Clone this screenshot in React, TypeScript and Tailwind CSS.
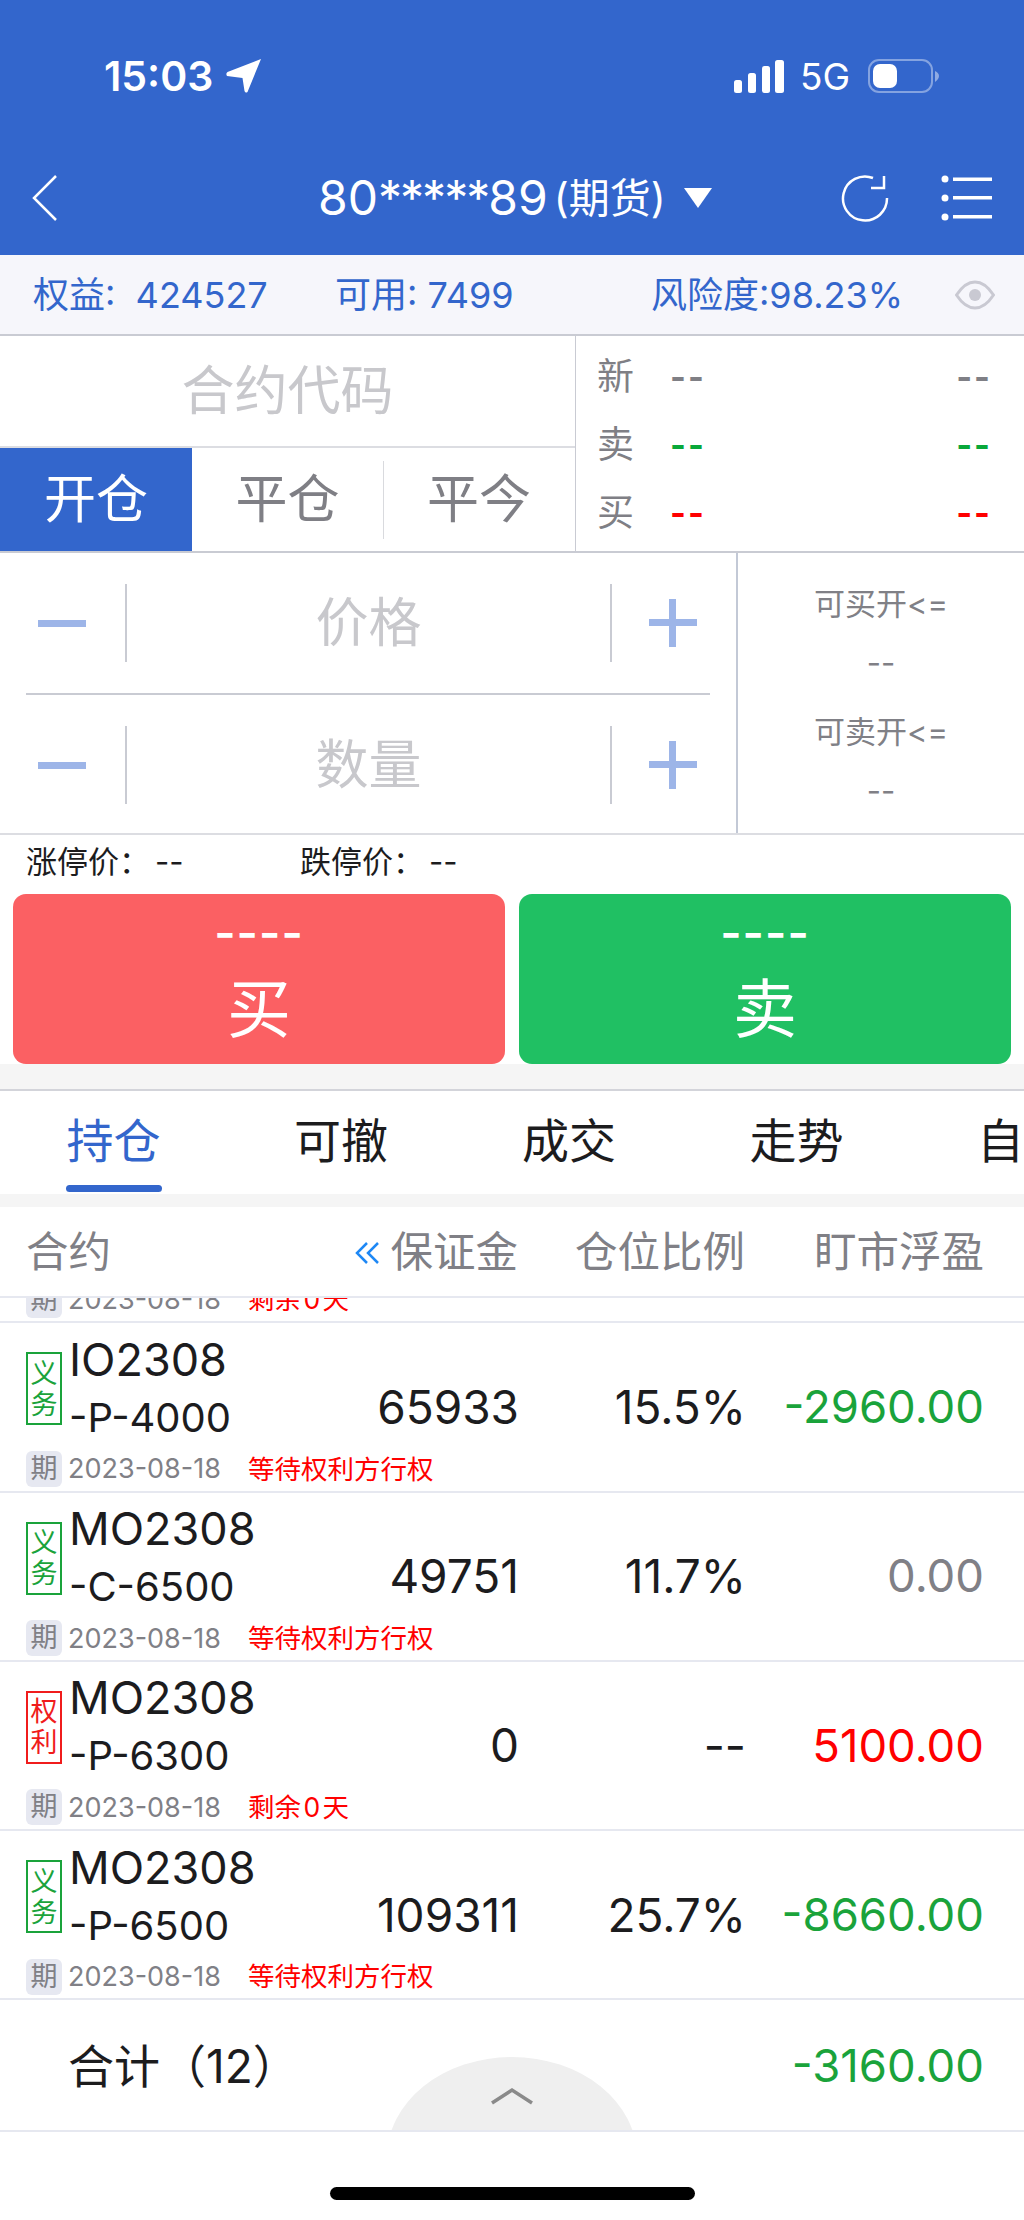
import React from "react";

const font = { fontFamily: 'Inter, "Noto Sans CJK SC", sans-serif' };

function Arrow() {
  return (
    <svg width="36" height="34" viewBox="0 0 36 34" className="ml-[13px]">
      <path d="M35 0 L21.5 33 Q19.5 34.5 18.5 32 L16.5 19 L1 17 Q-0.5 14.5 1.5 13 Z" fill="#fff" />
    </svg>
  );
}

function Signal() {
  return (
    <svg width="50" height="33" viewBox="0 0 50 33">
      <rect x="0" y="20" width="8" height="13" rx="2.5" fill="#fff" />
      <rect x="14" y="13" width="8" height="20" rx="2.5" fill="#fff" />
      <rect x="28" y="6" width="8" height="27" rx="2.5" fill="#fff" />
      <rect x="41" y="0" width="9" height="33" rx="2.5" fill="#fff" />
    </svg>
  );
}

function Battery() {
  return (
    <svg width="72" height="34" viewBox="0 0 72 34">
      <rect x="1" y="1" width="63" height="32" rx="10" fill="none" stroke="#fff" strokeOpacity="0.4" strokeWidth="2" />
      <rect x="5" y="5" width="24" height="24" rx="7" fill="#fff" />
      <path d="M67 12 Q71 14 71 17 Q71 20 67 23 Z" fill="#fff" fillOpacity="0.45" />
    </svg>
  );
}

function Eye() {
  return (
    <svg width="40" height="30" viewBox="0 0 40 30">
      <path d="M1.5 15 Q10 2 20 2 Q30 2 38.5 15 Q30 28 20 28 Q10 28 1.5 15 Z" fill="none" stroke="#c9c9d2" strokeWidth="3" />
      <circle cx="20" cy="15" r="6" fill="#c9c9d2" />
    </svg>
  );
}

function Minus() {
  return <div className="w-[48px] h-[7px] bg-[#9db5e8]" />;
}

function Plus() {
  return (
    <div className="relative w-[48px] h-[48px]">
      <div className="absolute left-0 top-[20px] w-[48px] h-[7px] bg-[#9db5e8]" />
      <div className="absolute left-[20px] top-0 w-[7px] h-[48px] bg-[#9db5e8]" />
    </div>
  );
}

function Stepper({ label }: { label: string }) {
  return (
    <div className="flex items-center h-[78px]">
      <div className="w-[127px] h-full pl-[38px] flex items-center border-r-[2px] border-[#c9cbd3]">
        <Minus />
      </div>
      <div className="w-[483px] text-center text-[53px] leading-none text-[#c8c8cc]">{label}</div>
      <div className="h-full pl-[37px] flex items-center border-l-[2px] border-[#c9cbd3]">
        <Plus />
      </div>
    </div>
  );
}

function Quote({ label, color }: { label: string; color: string }) {
  return (
    <div className="flex items-center h-[68px] pl-[21px] pr-[32px]">
      <span className="text-[37px] leading-none text-[#7f7f85] w-[73px]">{label}</span>
      <span className={`text-[34px] leading-none font-bold tracking-[2px] ${color}`}>--</span>
      <span className={`ml-auto text-[34px] leading-none font-bold tracking-[2px] ${color}`}>--</span>
    </div>
  );
}

type Row = {
  kind: "义务" | "权利";
  a: string;
  b: string;
  margin: string;
  pct: string;
  pl: string;
  plColor: string;
  note: string;
};

const rows: Row[] = [
  { kind: "义务", a: "MO2308", b: "-P-6000", margin: "", pct: "", pl: "", plColor: "", note: "剩余\u200A0\u200A天" },
  { kind: "义务", a: "IO2308", b: "-P-4000", margin: "65933", pct: "15.5%", pl: "-2960.00", plColor: "text-[#1aa33b]", note: "等待权利方行权" },
  { kind: "义务", a: "MO2308", b: "-C-6500", margin: "49751", pct: "11.7%", pl: "0.00", plColor: "text-[#808086]", note: "等待权利方行权" },
  { kind: "权利", a: "MO2308", b: "-P-6300", margin: "0", pct: "--", pl: "5100.00", plColor: "text-[#ff0000]", note: "剩余\u200A0\u200A天" },
  { kind: "义务", a: "MO2308", b: "-P-6500", margin: "109311", pct: "25.7%", pl: "-8660.00", plColor: "text-[#1aa33b]", note: "等待权利方行权" },
];

function Position({ row, first }: { row: Row; first?: boolean }) {
  const tag = row.kind === "义务" ? "border-[#1aa33b] text-[#1aa33b]" : "border-[#f01c1c] text-[#f01c1c]";
  return (
    <div className={`flex items-center h-[169.25px] shrink-0 border-b-[2px] border-[#e6e8f0] text-[#1c1c1e] ${first ? "mt-[-144px]" : ""}`}>
      <div className="w-[370px] shrink-0 pl-[26px]">
        <div className="flex items-center h-[116px] mt-[4px]">
          <div className={`w-[36px] h-[73px] shrink-0 border-[2px] flex flex-col items-center justify-center text-[27px] leading-[31px] ${tag}`}>
            <span>{row.kind[0]}</span>
            <span>{row.kind[1]}</span>
          </div>
          <div className="ml-[7px] whitespace-nowrap">
            <div className="text-[45px] leading-[58px]">{row.a}</div>
            <div className="text-[40px] leading-[58px]">{row.b}</div>
          </div>
        </div>
        <div className="flex items-center h-[36px] mt-[4px] whitespace-nowrap">
          <div className="w-[36px] h-[36px] shrink-0 rounded-[6px] bg-[#e6e8f1] text-[#808086] text-[27px] leading-[36px] text-center">期</div>
          <span className="ml-[6px] w-[180px] shrink-0 text-[27px] leading-none text-[#808086]">2023-08-18</span>
          <span className="text-[26.5px] leading-none text-[#ff0000]">{row.note}</span>
        </div>
      </div>
      <div className="w-[149px] text-right text-[46px] leading-none">{row.margin}</div>
      <div className="w-[227px] text-right text-[46px] leading-none">{row.pct}</div>
      <div className={`w-[238px] text-right text-[45.5px] leading-none ${row.plColor}`}>{row.pl}</div>
    </div>
  );
}

export default function App() {
  return (
    <div style={font} className="relative w-[1024px] h-[2220px] bg-white overflow-hidden">
      {/* blue header */}
      <div className="h-[255px] bg-[#3366cc] text-white">
        <div className="h-[150px] flex items-start pt-[59px]">
          <div className="pl-[104px] flex items-center h-[34px]">
            <span className="text-[41px] leading-none font-semibold">15:03</span>
            <Arrow />
          </div>
          <div className="ml-auto pr-[84px] flex items-center h-[34px]">
            <Signal />
            <span className="ml-[16px] text-[37px] leading-none">5G</span>
            <span className="ml-[18px]"><Battery /></span>
          </div>
        </div>
        <div className="relative h-[105px] flex items-start">
          <svg width="30" height="48" viewBox="0 0 30 48" className="ml-[31px] mt-[24px]">
            <path d="M25 2 L3 24 L25 46" fill="none" stroke="#fff" strokeWidth="2.5" />
          </svg>
          <div className="absolute left-[318px] top-[22px] flex items-center h-[52px] whitespace-nowrap">
            <span className="text-[48px] leading-none">
              80<span className="tracking-[-2px]">*****</span>89
            </span>
            <span className="ml-[6px] text-[41px] leading-none">(期货)</span>
            <svg width="28" height="20" viewBox="0 0 28 20" className="ml-[18px]">
              <path d="M0 0 H28 L14 20 Z" fill="#fff" />
            </svg>
          </div>
          <div className="ml-auto flex items-start pr-[31px]">
            <svg width="50" height="50" viewBox="0 0 50 50" className="mt-[22px] mr-[1px]">
              <path d="M32 6 A22 22 0 1 0 46 26" fill="none" stroke="#fff" strokeWidth="2.5" />
              <path d="M30 16 H43 V4" fill="none" stroke="#fff" strokeWidth="2.5" />
            </svg>
            <svg width="52" height="46" viewBox="0 0 52 46" className="ml-[49px] mt-[25px]">
              <circle cx="4" cy="4" r="3.5" fill="#fff" />
              <circle cx="4" cy="23" r="3.5" fill="#fff" />
              <circle cx="4" cy="42" r="3.5" fill="#fff" />
              <rect x="12" y="2.5" width="39" height="3.5" fill="#fff" />
              <rect x="12" y="21" width="39" height="3.5" fill="#fff" />
              <rect x="12" y="40" width="39" height="3.5" fill="#fff" />
            </svg>
          </div>
        </div>
      </div>

      {/* account bar */}
      <div className="h-[81px] bg-[#f6f6fb] border-b-[2px] border-[#c9cbd3] flex items-center text-[#3366cc] text-[36px] leading-none whitespace-nowrap">
        <span className="ml-[33px] w-[302px]">权益:&nbsp;&nbsp;424527</span>
        <span className="w-[316px]">可用: 7499</span>
        <span className="w-[304px]">风险度:98.23%</span>
        <Eye />
      </div>

      {/* contract + quotes */}
      <div className="flex h-[217px] border-b-[2px] border-[#c9cbd3]">
        <div className="w-[576px] shrink-0 border-r border-[#c9cbd3] flex flex-col">
          <div className="h-[112px] border-b-[2px] border-[#dcdde2] flex items-center justify-center text-[53px] leading-none text-[#c8c8cc]">
            合约代码
          </div>
          <div className="flex-1 flex items-stretch text-[52px] leading-none text-[#7f7f85]">
            <div className="w-[192px] bg-[#3366cc] text-white flex items-center justify-center">开仓</div>
            <div className="w-[191px] flex items-center justify-center">平仓</div>
            <div className="flex-1 flex items-center justify-center relative">
              <div className="absolute left-0 top-[13px] bottom-[12px] border-l border-[#d9dade]" />
              平今
            </div>
          </div>
        </div>
        <div className="flex-1 flex flex-col justify-center pt-[2px]">
          <Quote label="新" color="text-[#7f7f85]" />
          <Quote label="卖" color="text-[#09a83a]" />
          <Quote label="买" color="text-[#ff0000]" />
        </div>
      </div>

      {/* steppers */}
      <div className="flex h-[282px] border-b-[2px] border-[#dcdde2]">
        <div className="w-[738px] shrink-0 border-r-[2px] border-[#c3c9d6] flex flex-col">
          <div className="h-[140px] pt-[31px]">
            <Stepper label="价格" />
          </div>
          <div className="mx-[26px] border-t-[2px] border-[#c9cbd3]" />
          <div className="pt-[31px]">
            <Stepper label="数量" />
          </div>
        </div>
        <div className="flex-1 flex flex-col items-center text-[31px] leading-none text-[#808086]">
          <span className="mt-[35px]">可买开&lt;=</span>
          <span className="mt-[28px]">--</span>
          <span className="mt-[38px]">可卖开&lt;=</span>
          <span className="mt-[28px]">--</span>
        </div>
      </div>

      {/* limits */}
      <div className="h-[59px] flex items-center text-[31px] leading-none text-[#1c1c1e] whitespace-nowrap pb-[6px]">
        <span className="ml-[26px] w-[129px]">涨停价：</span>
        <span className="w-[145px]">--</span>
        <span className="w-[129px]">跌停价：</span>
        <span>--</span>
      </div>

      {/* action buttons */}
      <div className="flex gap-[14px] px-[13px] h-[170px] text-white">
        <div className="w-[492px] rounded-[13px] bg-[#fb6063] flex flex-col items-center">
          <span className="mt-[15px] text-[46px] leading-[46px] font-semibold tracking-[1px]">----</span>
          <span className="mt-[21px] text-[64px] leading-[66px]">买</span>
        </div>
        <div className="w-[492px] rounded-[13px] bg-[#20c063] flex flex-col items-center">
          <span className="mt-[15px] text-[46px] leading-[46px] font-semibold tracking-[1px]">----</span>
          <span className="mt-[21px] text-[64px] leading-[66px]">卖</span>
        </div>
      </div>

      <div className="h-[27px] bg-[#f5f5f5] border-b-[2px] border-[#d3d4da]" />

      {/* tabs */}
      <div className="h-[103px] flex overflow-hidden text-[47px] leading-none text-[#1c1c1e] whitespace-nowrap">
        <div className="relative w-[227px] shrink-0 pt-[26px] text-center text-[#3366cc]">
          持仓
          <div className="absolute left-[66px] top-[94px] w-[96px] h-[7px] rounded-full bg-[#3366cc]" />
        </div>
        <div className="w-[228px] shrink-0 pt-[26px] text-center">可撤</div>
        <div className="w-[228px] shrink-0 pt-[26px] text-center">成交</div>
        <div className="w-[227px] shrink-0 pt-[26px] text-center">走势</div>
        <div className="pl-[67px] shrink-0 pt-[26px]">自选</div>
      </div>

      <div className="h-[13px] bg-[#f5f5f5]" />

      {/* table header */}
      <div className="h-[91px] flex items-center border-b-[2px] border-[#e6e8f0] text-[42.5px] leading-none text-[#808086] whitespace-nowrap pt-[2px]">
        <span className="ml-[26px] w-[329px]">合约</span>
        <svg width="24" height="22" viewBox="0 0 24 22">
          <path d="M12 1 L2 11 L12 21 M23 1 L13 11 L23 21" fill="none" stroke="#1e88f5" strokeWidth="2.5" />
        </svg>
        <span className="w-[139px] text-right">保证金</span>
        <span className="w-[227px] text-right">仓位比例</span>
        <span className="w-[239px] text-right">盯市浮盈</span>
      </div>

      {/* positions */}
      <div className="h-[703px] overflow-hidden flex flex-col">
        {rows.map((r, i) => (
          <Position key={i} row={r} first={i === 0} />
        ))}
      </div>

      {/* total */}
      <div className="relative h-[131px] flex items-center border-b-[2px] border-[#e6e8f0] overflow-hidden">
        <span className="ml-[68px] text-[46px] leading-none text-[#1c1c1e] whitespace-nowrap">合计（12）</span>
        <span className="ml-auto mr-[40px] text-[45.5px] leading-none text-[#1aa33b]">-3160.00</span>
        <div className="absolute left-[387px] top-[56px] w-[250px] h-[200px] rounded-[50%] bg-[#efefef] flex justify-center pt-[30px]">
          <svg width="44" height="18" viewBox="0 0 44 18">
            <path d="M2 16 L22 3 L42 16" fill="none" stroke="#8a8a8a" strokeWidth="3.5" />
          </svg>
        </div>
      </div>

      {/* home indicator */}
      <div className="flex justify-center pt-[55px]">
        <div className="w-[365px] h-[13px] rounded-full bg-black" />
      </div>
    </div>
  );
}
